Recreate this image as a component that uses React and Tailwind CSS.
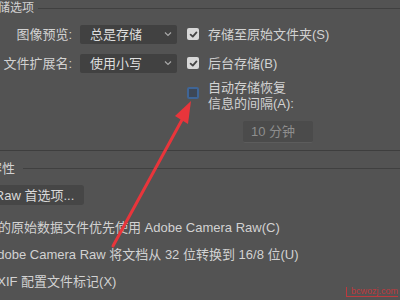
import React from 'react';

const Check = ({ checked = true }) => (
  <div className="w-[12px] h-[12px] rounded-[2px] bg-[#d8d8d8] flex items-center justify-center shrink-0">
    {checked && (
      <svg width="9" height="9" viewBox="0 0 10 10">
        <path d="M1.8 5.2 L4.2 7.4 L8.3 2.6" fill="none" stroke="#444" strokeWidth="2" strokeLinecap="round" strokeLinejoin="round" />
      </svg>
    )}
  </div>
);

const Chevron = ({ color = '#a8a8a8' }) => (
  <svg width="8" height="6" viewBox="0 0 8 6" className="shrink-0">
    <path d="M1 1.5 L4 4.5 L7 1.5" fill="none" stroke={color} strokeWidth="1.2" />
  </svg>
);

const Select = ({ value }) => (
  <div className="ml-[8px] w-[97px] h-[19px] bg-[#414141] rounded-[2px] flex items-center pl-[10px] pr-[5px] text-[#dedede]">
    <span className="flex-1">{value}</span>
    <Chevron />
  </div>
);

function App() {
  return (
    <div
      className="w-[400px] h-[300px] overflow-hidden bg-[#535353] relative text-[13px] text-[#d2d2d2] leading-none"
      style={{ fontFamily: '"Liberation Sans", "Noto Sans CJK SC", sans-serif' }}
    >
      {/* 存储选项 title */}
      <div className="flex items-center h-[16px] ml-[-14px]">
        <span className="text-[12px] whitespace-nowrap">存储选项</span>
        <div className="flex-1 h-px bg-[#404040] ml-[4px]" />
      </div>

      {/* row 1 */}
      <div className="flex items-center h-[20px] mt-[8px]">
        <div className="w-[72px] text-right whitespace-nowrap">图像预览:</div>
        <Select value="总是存储" />
        <div className="ml-[10px]"><Check /></div>
        <span className="ml-[9px] whitespace-nowrap">存储至原始文件夹(S)</span>
      </div>

      {/* row 2 */}
      <div className="flex items-center h-[20px] mt-[9px]">
        <div className="w-[72px] text-right whitespace-nowrap">文件扩展名:</div>
        <Select value="使用小写" />
        <div className="ml-[10px]"><Check /></div>
        <span className="ml-[9px] whitespace-nowrap">后台存储(B)</span>
      </div>

      {/* row 3 */}
      <div className="flex mt-[7px] pl-[187px]">
        <div className="mt-[7px] w-[12px] h-[12px] rounded-[2px] border-2 border-[#3f6596] bg-[#3d4756] shrink-0" />
        <div className="ml-[9px] leading-[16px]">
          <div>自动存储恢复</div>
          <div>信息的间隔(A):</div>
        </div>
      </div>

      <div className="mt-[9px] ml-[243px] w-[70px] h-[22px] bg-[#4b4b4b] border-b border-[#5c5c5c] rounded-[2px] flex items-center pl-[8px] text-[#8e8e8e]">
        10 分钟
      </div>

      <div className="mt-[7px] h-px bg-[#3e3e3e]" />

      {/* 文件兼容性 title */}
      <div className="flex items-center h-[16px] mt-[9px] ml-[-50px]">
        <span className="whitespace-nowrap">文件兼容性</span>
        <div className="flex-1 h-px bg-[#404040] ml-[8px]" />
      </div>

      <div className="mt-[9px] ml-[-65px] h-[20px] w-fit px-[10px] bg-[#464646] rounded-[3px] flex items-center whitespace-nowrap text-[#dadada]">
        Camera Raw 首选项...
      </div>

      <div className="mt-[9px] ml-[-41px] flex flex-col whitespace-nowrap">
        <div className="h-[27px] flex items-center">对支持的原始数据文件优先使用 Adobe Camera Raw(C)</div>
        <div className="h-[27px] flex items-center">使用 Adobe Camera Raw 将文档从 32 位转换到 16/8 位(U)</div>
        <div className="h-[27px] flex items-center">忽略 EXIF 配置文件标记(X)</div>
      </div>

      {/* red annotation arrow */}
      <svg className="absolute left-0 top-0 pointer-events-none" width="400" height="300" viewBox="0 0 400 300">
        <path d="M113 246 L183 118" stroke="#e8353b" strokeWidth="3" strokeLinecap="round" />
        <polygon points="191,101 175,116 188,124" fill="#e8353b" />
      </svg>

      {/* watermark */}
      <div className="absolute right-[2px] bottom-[3px] text-[9px] text-[#d8343a] opacity-80 border-l border-b border-[#d8343a] pl-[4px]">
        bcwozj.com
      </div>
    </div>
  );
}

export default App;
